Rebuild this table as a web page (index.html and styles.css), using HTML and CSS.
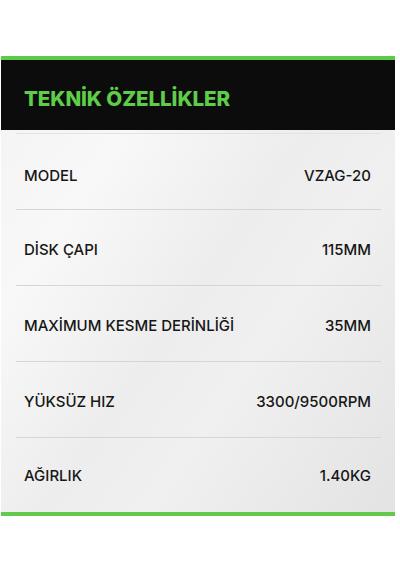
FILE: index.html
```html
<!DOCTYPE html>
<html lang="tr">
  <head>
    <meta charset="utf-8">
    <title>Teknik Özellikler</title>
    <link rel="stylesheet" href="styles.css">
  </head>
  <body>

    <!-- Spec panel -->
    <div class="spec-panel">
      <div class="spec-header">
        <h2>TEKNİK ÖZELLİKLER</h2>
      </div>

      <div class="spec-list">
        <div class="spec-row">
          <span class="spec-label">MODEL</span>
          <span class="spec-value">VZAG-20</span>
        </div>
        <div class="spec-row">
          <span class="spec-label">DİSK ÇAPI</span>
          <span class="spec-value">115MM</span>
        </div>
        <div class="spec-row">
          <span class="spec-label">MAXİMUM KESME DERİNLİĞİ</span>
          <span class="spec-value">35MM</span>
        </div>
        <div class="spec-row">
          <span class="spec-label">YÜKSÜZ HIZ</span>
          <span class="spec-value">3300/9500RPM</span>
        </div>
        <div class="spec-row">
          <span class="spec-label">AĞIRLIK</span>
          <span class="spec-value">1.40KG</span>
        </div>
      </div>
    </div>

  </body>
</html>
```

FILE: styles.css
```css
body {
  margin: 0;
  background-color: #fff;
  font-family: Inter, "Open Sans", sans-serif;
}

/* Panel */
.spec-panel {
  margin: 56px 5px 0 1px;
  border-top: 4px solid #5ccb47;
  border-bottom: 4px solid #62c94e;
  background: linear-gradient(125deg, #f3f3f3 0%, #f8f8f8 25%, #ededed 50%, #f0f0f0 65%, #e3e3e3 100%);
}

/* Black title bar */
.spec-header {
  height: 70px;
  background-color: #0c0c0c;
  display: flex;
  align-items: center;
  padding: 0 23px;
}

.spec-header h2 {
  margin: 6px 0 0 0;
  font-size: 20.6px;
  font-weight: 800;
  color: #5fcc4a;
  letter-spacing: -0.1px;
}

/* Rows */
.spec-list {
  margin-top: 3px;
  border-top: 1px solid #e2e2e2;
  margin-left: 15px;
  margin-right: 14px;
}

.spec-row {
  height: 76px;
  box-sizing: border-box;
  display: flex;
  justify-content: space-between;
  align-items: center;
  padding: 3px 10px 0 8px;
  border-bottom: 1px solid #d6d6d6;
  font-size: 15px;
  font-weight: 500;
  color: #161616;
}

.spec-row:first-child {
  padding-top: 8px;
}

.spec-row:last-child {
  height: 74px;
  padding-top: 1px;
  border-bottom: none;
}
```
